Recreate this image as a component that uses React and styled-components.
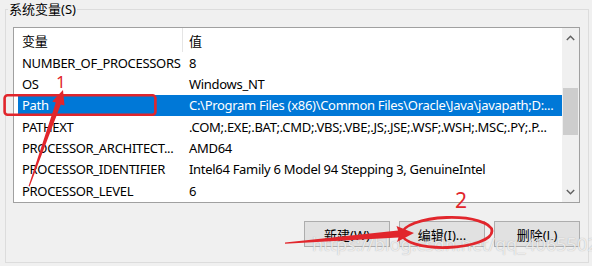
import React from 'react';
import styled, { createGlobalStyle } from 'styled-components';

const GlobalStyle = createGlobalStyle`
  html, body {
    margin: 0;
    padding: 0;
    background: #f0f0f0;
  }
  body {
    font-family: "Noto Sans", "Noto Sans CJK SC", sans-serif;
    font-size: 13px;
    color: #000;
  }
`;

const Page = styled.div`
  position: relative;
  width: 592px;
  height: 266px;
  overflow: hidden;
`;

const Group = styled.fieldset`
  margin: 0 3px 0 5px;
  padding: 9px 8px 15px 7px;
  border: 1px solid #dcdcdc;
  min-width: 0;
`;

const Legend = styled.legend`
  padding: 0 1px;
  margin-left: -5px;
  line-height: 18px;
  color: #000;
`;

const ListBox = styled.div`
  display: flex;
  height: 176px;
  box-sizing: border-box;
  border: 1px solid #a0a0a0;
  background: #fff;
`;

const Table = styled.div`
  flex: 1;
  min-width: 0;
  display: flex;
  flex-direction: column;
  letter-spacing: -0.3px;
`;

const Row = styled.div`
  display: grid;
  grid-template-columns: 165px 1fr;
  align-items: center;
  height: ${p => (p.$header ? '24px' : '21.33px')};
  margin-left: 4px;
  background: ${p => (p.$selected ? '#0078d7' : 'transparent')};
  color: ${p => (p.$selected ? '#fff' : '#000')};
`;

const Cell = styled.div`
  height: 100%;
  display: flex;
  align-items: center;
  white-space: nowrap;
  overflow: hidden;
  padding-left: ${p => (p.$value ? '6px' : '4px')};
  border-right: ${p => (p.$divider ? '1px solid #e5e5e5' : 'none')};
`;

const ScrollBar = styled.div`
  width: 17px;
  display: flex;
  flex-direction: column;
  background: #f0f0f0;
`;

const ScrollButton = styled.div`
  height: 20px;
  display: flex;
  align-items: center;
  justify-content: center;
`;

const Track = styled.div`
  flex: 1;
  display: flex;
  flex-direction: column;
  align-items: center;
`;

const Thumb = styled.div`
  width: 15px;
  background: #cdcdcd;
`;

const ButtonRow = styled.div`
  display: flex;
  justify-content: flex-end;
  gap: 9px;
  margin-top: 18px;
`;

const Button = styled.button`
  width: 86px;
  height: 26px;
  padding: 0;
  background: #e1e1e1;
  border: 1px solid #adadad;
  font: inherit;
  color: #000;
`;

const Overlay = styled.svg`
  position: absolute;
  left: 0;
  top: 0;
  pointer-events: none;
`;

const Watermark = styled.div`
  position: absolute;
  left: 312px;
  top: 232px;
  white-space: nowrap;
  font-family: "Noto Sans", sans-serif;
  font-size: 18px;
  color: rgba(255, 255, 255, 0.75);
  text-shadow: 0 0 1px rgba(120, 120, 120, 0.6);
  pointer-events: none;
`;

const Chevron = ({ up }) => (
  <svg width="9" height="6" viewBox="0 0 9 6">
    <polyline
      points={up ? '0.8,5 4.5,1.2 8.2,5' : '0.8,1 4.5,4.8 8.2,1'}
      fill="none"
      stroke="#606060"
      strokeWidth="1.4"
    />
  </svg>
);

const rows = [
  { name: 'NUMBER_OF_PROCESSORS', value: '8' },
  { name: 'OS', value: 'Windows_NT' },
  { name: 'Path', value: 'C:\\Program Files (x86)\\Common Files\\Oracle\\Java\\javapath;D:...', selected: true },
  { name: 'PATHEXT', value: '.COM;.EXE;.BAT;.CMD;.VBS;.VBE;.JS;.JSE;.WSF;.WSH;.MSC;.PY;.P...' },
  { name: 'PROCESSOR_ARCHITECT...', value: 'AMD64' },
  { name: 'PROCESSOR_IDENTIFIER', value: 'Intel64 Family 6 Model 94 Stepping 3, GenuineIntel' },
  { name: 'PROCESSOR_LEVEL', value: '6' },
];

const RED = '#e1262c';

export default function App() {
  return (
    <Page>
      <GlobalStyle />
      <Group>
        <Legend>系统变量(S)</Legend>
        <ListBox>
          <Table>
            <Row $header>
              <Cell $divider>变量</Cell>
              <Cell $value>值</Cell>
            </Row>
            {rows.map(r => (
              <Row key={r.name} $selected={r.selected}>
                <Cell>{r.name}</Cell>
                <Cell $value>{r.value}</Cell>
              </Row>
            ))}
          </Table>
          <ScrollBar>
            <ScrollButton><Chevron up /></ScrollButton>
            <Track>
              <Thumb style={{ marginTop: 40, height: 47 }} />
            </Track>
            <ScrollButton><Chevron /></ScrollButton>
          </ScrollBar>
        </ListBox>
        <ButtonRow>
          <Button>新建(W)</Button>
          <Button>编辑(I)...</Button>
          <Button>删除(L)</Button>
        </ButtonRow>
      </Group>

      <Watermark>https://blog.csdn.net/qq_40655029</Watermark>

      <Overlay width="592" height="266" viewBox="0 0 592 266">
        <rect x="4.6" y="95.3" width="150.8" height="19.4" rx="3" fill="none" stroke={RED} strokeWidth="2.6" />
        <polygon
          fill={RED}
          points="63,90 64.5,105.5 60.8,104.4 29.6,186.4 28.6,186 55.8,102.6 52.2,101.4"
        />
        <text x="56" y="88" fill={RED} fontFamily="Noto Sans, sans-serif" fontSize="17">1</text>

        <ellipse cx="447" cy="232.5" rx="45" ry="15" fill="none" stroke={RED} strokeWidth="2.8" transform="rotate(-2 447 232.5)" />
        <polygon
          fill={RED}
          points="414,233 397,242 398.5,237.5 285,243.8 285,242.4 398,230.5 396.5,226"
        />
        <text x="455" y="208" fill={RED} fontFamily="Noto Sans, sans-serif" fontSize="21">2</text>
      </Overlay>
    </Page>
  );
}
